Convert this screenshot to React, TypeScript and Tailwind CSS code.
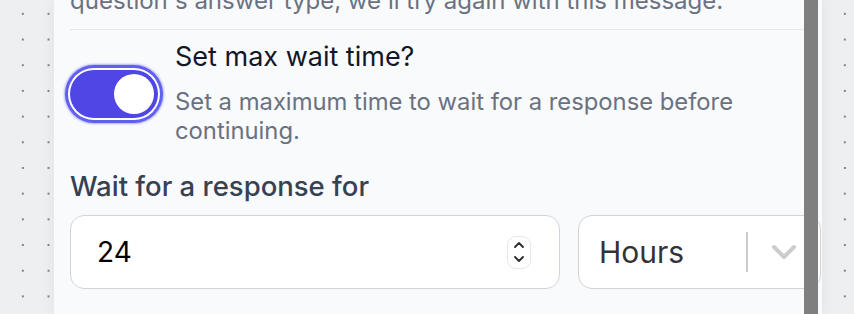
import { useState } from "react";

const ChevronUp = () => (
  <svg width="10" height="6" viewBox="0 0 10 6" fill="none">
    <path d="M1 5l4-4 4 4" stroke="#2b2b2b" strokeWidth="1.8" strokeLinecap="round" strokeLinejoin="round" />
  </svg>
);

const ChevronDown = () => (
  <svg width="10" height="6" viewBox="0 0 10 6" fill="none">
    <path d="M1 1l4 4 4-4" stroke="#2b2b2b" strokeWidth="1.8" strokeLinecap="round" strokeLinejoin="round" />
  </svg>
);

const Toggle = ({ on, onChange }: { on: boolean; onChange: () => void }) => (
  <button
    type="button"
    onClick={onChange}
    className={`flex h-[48px] w-[88px] shrink-0 items-center rounded-full p-[4px] shadow-[0_0_0_2px_#fff,0_0_0_5px_#615ef2,0_0_2px_6px_rgba(99,102,241,0.5)] ${
      on ? "justify-end bg-[#4f46e5]" : "justify-start bg-gray-300"
    }`}
  >
    <span className="block h-[40px] w-[40px] rounded-full bg-white" />
  </button>
);

export default function App() {
  const [enabled, setEnabled] = useState(true);
  const [value, setValue] = useState("24");

  return (
    <div
      className="flex h-[314px] w-[854px] overflow-hidden bg-[#eeeff1] bg-[radial-gradient(circle,#7d828c_0.9px,transparent_1.3px)] bg-[length:25.7px_25.7px] bg-[position:10px_1px]"
      style={{ fontFamily: "Inter, 'Noto Sans', sans-serif" }}
    >
      <div className="relative ml-[54px] h-full w-[768px] shrink-0 overflow-hidden bg-gray-50 shadow-[0_0_14px_rgba(0,0,0,0.06)]">
        <div className="px-4">
          <p className="mt-[-14px] text-[24px] leading-[30px] text-gray-500">
            question's answer type, we'll try again with this message.
          </p>
          <div className="mt-[13px] border-t border-gray-200" />

          <div className="mt-[9px] flex">
            <div className="pt-[31px]">
              <Toggle on={enabled} onChange={() => setEnabled(!enabled)} />
            </div>
            <div className="ml-[17px]">
              <h3 className="text-[27px] leading-[36px] text-gray-900">Set max wait time?</h3>
              <p className="mt-[12px] text-[23.8px] leading-[29px] text-gray-500">
                Set a maximum time to wait for a response before
                <br />
                continuing.
              </p>
            </div>
          </div>

          <label className="mt-[23px] block text-[27.5px] font-medium leading-[36px] text-gray-700">
            Wait for a response for
          </label>

          <div className="mt-[11px] flex w-[751px] gap-[18px]">
            <div className="flex h-[74px] w-[490px] items-center rounded-[14px] border-[1.5px] border-gray-300 bg-white pl-[26px] pr-[28px]">
              <input
                value={value}
                onChange={(e) => setValue(e.target.value)}
                className="w-full bg-transparent text-[28px] text-black outline-none"
              />
              <div className="flex h-[33px] w-[24px] shrink-0 flex-col items-center justify-center gap-[8px] rounded-[9px] border-[1.5px] border-gray-200 bg-white">
                <ChevronUp />
                <ChevronDown />
              </div>
            </div>

            <div className="flex h-[74px] flex-1 items-center rounded-[14px] border-[1.5px] border-[#d4d4d4] bg-white">
              <span className="flex-1 pl-[20px] text-[30px] text-[#333]">Hours</span>
              <span className="h-[40px] w-[2px] bg-[#ccc]" />
              <span className="flex w-[72px] justify-center">
                <svg width="26" height="16" viewBox="0 0 26 16" fill="none">
                  <path d="M3 3l10 10 10-10" stroke="#ccc" strokeWidth="4" strokeLinecap="round" strokeLinejoin="round" />
                </svg>
              </span>
            </div>
          </div>
        </div>

        <div className="absolute bottom-0 right-[4px] top-0 w-[14px] bg-[#7f7f7f]" />
      </div>
    </div>
  );
}
